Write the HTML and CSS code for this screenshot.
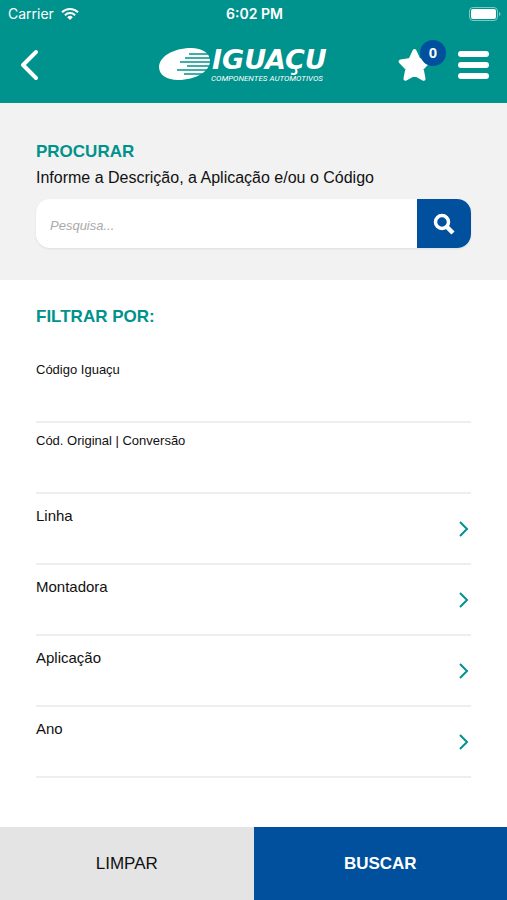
FILE: index.html
```html
<!DOCTYPE html>
<html lang="pt-BR">
<head>
    <meta charset="utf-8">
    <meta name="viewport" content="width=device-width, initial-scale=1">
    <title>Iguaçu Componentes Automotivos</title>
    <link rel="stylesheet" href="styles.css">
</head>
<body>
<header class="header">
    <div class="status-bar">
        <div class="carrier">
            <span>Carrier</span>
            <svg width="18" height="14" viewBox="0 0 18 14" fill="none" stroke="#fff" stroke-width="2">
                <path d="M1 5.2a11.3 11.3 0 0 1 16 0"/>
                <path d="M3.9 8.2a7.2 7.2 0 0 1 10.2 0"/>
                <path d="M9 13l-2.8-2.8a4 4 0 0 1 5.6 0z" fill="#fff" stroke="none"/>
            </svg>
        </div>
        <span class="clock">6:02 PM</span>
        <svg class="battery" width="32" height="14" viewBox="0 0 32 14">
            <rect x="0.5" y="0.5" width="28" height="13" rx="3.5" fill="none" stroke="#7fc9c5"/>
            <rect x="2" y="2" width="25" height="10" rx="2" fill="#fff"/>
            <path d="M30 5v4q1.5-.5 1.5-2t-1.5-2z" fill="#7fc9c5"/>
        </svg>
    </div>
    <nav class="nav">
        <button class="icon-button back" type="button" aria-label="Voltar">
            <svg width="20" height="32" viewBox="0 0 20 32" fill="none" stroke="#fff" stroke-width="4" stroke-linecap="round" stroke-linejoin="round">
                <path d="M16 3L3 16l13 13"/>
            </svg>
        </button>
        <a class="logo" href="#" aria-label="Iguaçu">
            <svg width="172" height="48" viewBox="0 -6 172 48">
                <path d="M32 1C14 1 0 10 0 20c0 8 8 13 19 13 18 0 32-9 32-19C51 6 43 1 32 1z" fill="#fff"/>
                <path d="M30 7h21M26 11h26M21 15h31M28 19h24M18 23h33M25 27h24" stroke="#00928c" stroke-width="1.6"/>
                <text class="logo-name" x="53" y="22">IGUAÇU</text>
                <text class="logo-tag" x="52" y="34">COMPONENTES AUTOMOTIVOS</text>
            </svg>
        </a>
        <div class="actions">
            <button class="icon-button favorites" type="button" aria-label="Favoritos">
                <svg width="33" height="34" viewBox="0 0 33 34" fill="#fff" stroke="#fff" stroke-width="4" stroke-linejoin="round">
                    <path d="M16.5 3l4.2 9 9.6 1.5-6.7 7 1.9 10.2-9-4.9-9 4.9 1.9-10.2-6.7-7 9.6-1.5z"/>
                </svg>
                <span class="badge">0</span>
            </button>
            <button class="icon-button" type="button" aria-label="Menu">
                <svg width="31" height="28" viewBox="0 0 31 28" fill="#fff">
                    <rect width="31" height="6" rx="3"/>
                    <rect y="11" width="31" height="6" rx="3"/>
                    <rect y="22" width="31" height="6" rx="3"/>
                </svg>
            </button>
        </div>
    </nav>
</header>

<form class="page">
    <section class="search">
        <h2>PROCURAR</h2>
        <label for="pesquisa">Informe a Descrição, a Aplicação e/ou o Código</label>
        <div class="search-box">
            <input id="pesquisa" type="text" placeholder="Pesquisa...">
            <button type="button" aria-label="Pesquisar">
                <svg width="22" height="22" viewBox="0 0 22 22" fill="none" stroke="#fff">
                    <circle cx="9" cy="9" r="6.5" stroke-width="3.5"/>
                    <path d="M14 14l6 6" stroke-width="4.5"/>
                </svg>
            </button>
        </div>
    </section>

    <section class="filters">
        <h2>FILTRAR POR:</h2>
        <div class="row field">
            <label for="codigo">Código Iguaçu</label>
            <input id="codigo" type="text">
        </div>
        <div class="row field">
            <label for="original">Cód. Original | Conversão</label>
            <input id="original" type="text">
        </div>
        <button class="row option" type="button">
            <span>Linha</span>
            <svg width="10" height="16" viewBox="0 0 10 16"><path d="M1 1l7 7-7 7"/></svg>
        </button>
        <button class="row option" type="button">
            <span>Montadora</span>
            <svg width="10" height="16" viewBox="0 0 10 16"><path d="M1 1l7 7-7 7"/></svg>
        </button>
        <button class="row option" type="button">
            <span>Aplicação</span>
            <svg width="10" height="16" viewBox="0 0 10 16"><path d="M1 1l7 7-7 7"/></svg>
        </button>
        <button class="row option" type="button">
            <span>Ano</span>
            <svg width="10" height="16" viewBox="0 0 10 16"><path d="M1 1l7 7-7 7"/></svg>
        </button>
    </section>

    <div class="footer">
        <button class="clear" type="reset">LIMPAR</button>
        <button class="submit" type="button">BUSCAR</button>
    </div>
</form>
</body>
</html>
```
FILE: styles.css
```css
* {
    box-sizing: border-box;
    margin: 0;
    padding: 0;
}

body {
    display: flex;
    flex-direction: column;
    min-height: 100vh;
    background: #fff;
    color: #111;
    font-family: "Liberation Sans", Arial, sans-serif;
}

button,
input {
    border: 0;
    background: none;
    color: inherit;
    font-family: inherit;
}

button {
    cursor: pointer;
}

svg {
    display: block;
}

h2 {
    color: #00928c;
    font-size: 17px;
    line-height: 20px;
}

/* header */
.header {
    background: #00928c;
    color: #fff;
}

.status-bar {
    display: grid;
    grid-template-columns: 1fr auto 1fr;
    align-items: center;
    height: 27px;
    padding: 0 6px 0 8px;
    font-family: Inter, sans-serif;
    font-size: 14px;
}

.carrier {
    display: flex;
    align-items: center;
    gap: 7px;
}

.clock {
    font-weight: 600;
}

.battery {
    justify-self: end;
}

.nav {
    display: grid;
    grid-template-columns: 1fr auto 1fr;
    align-items: center;
    height: 76px;
    padding: 0 18px 0 20px;
}

.back {
    justify-self: start;
}

.logo {
    margin-right: 20px;
}

.logo-name {
    fill: #fff;
    font-family: "DejaVu Sans", sans-serif;
    font-size: 27px;
    font-style: italic;
    font-weight: bold;
}

.logo-tag {
    fill: #fff;
    font-family: Roboto, sans-serif;
    font-size: 8px;
    font-style: italic;
}

.actions {
    display: flex;
    align-items: center;
    justify-self: end;
    gap: 12px;
}

.favorites {
    position: relative;
    width: 48px;
}

.badge {
    position: absolute;
    top: -8px;
    right: 0;
    width: 26px;
    height: 26px;
    border-radius: 50%;
    background: #00509d;
    font-size: 15px;
    font-weight: bold;
    line-height: 26px;
    text-align: center;
}

/* content */
.page {
    display: flex;
    flex: 1;
    flex-direction: column;
}

.search {
    padding: 39px 36px 32px;
    background: #f2f2f2;
}

.search label {
    display: block;
    margin: 4px 0 9px;
    font-size: 16px;
    line-height: 24px;
}

.search-box {
    display: flex;
    height: 49px;
    overflow: hidden;
    border-radius: 14px;
    background: #fff;
    box-shadow: 0 1px 2px #ddd;
}

.search-box input {
    flex: 1;
    min-width: 0;
    padding: 4px 14px 0;
    font-size: 13px;
}

.search-box input::placeholder {
    color: #aaa;
    font-style: italic;
}

.search-box button {
    display: flex;
    align-items: center;
    justify-content: center;
    width: 54px;
    background: #00509d;
}

.filters {
    flex: 1;
    padding: 27px 36px;
}

.filters h2 {
    margin-bottom: 25px;
}

.row {
    display: flex;
    width: 100%;
    height: 71px;
    border-bottom: 2px solid #eee;
}

.field {
    flex-direction: column;
    padding-top: 8px;
    font-size: 13px;
    line-height: 20px;
}

.field input {
    flex: 1;
    font-size: 15px;
}

.option {
    align-items: center;
    justify-content: space-between;
    padding-right: 2px;
    font-size: 15px;
    line-height: 20px;
}

.option span {
    align-self: flex-start;
    padding-top: 12px;
}

.option svg {
    fill: none;
    stroke: #00928c;
    stroke-width: 2;
}

/* footer */
.footer {
    display: flex;
}

.footer button {
    flex: 1;
    height: 73px;
    font-size: 17px;
}

.clear {
    background: #e4e4e4;
}

.footer .submit {
    background: #00509d;
    color: #fff;
    font-weight: bold;
}
```
